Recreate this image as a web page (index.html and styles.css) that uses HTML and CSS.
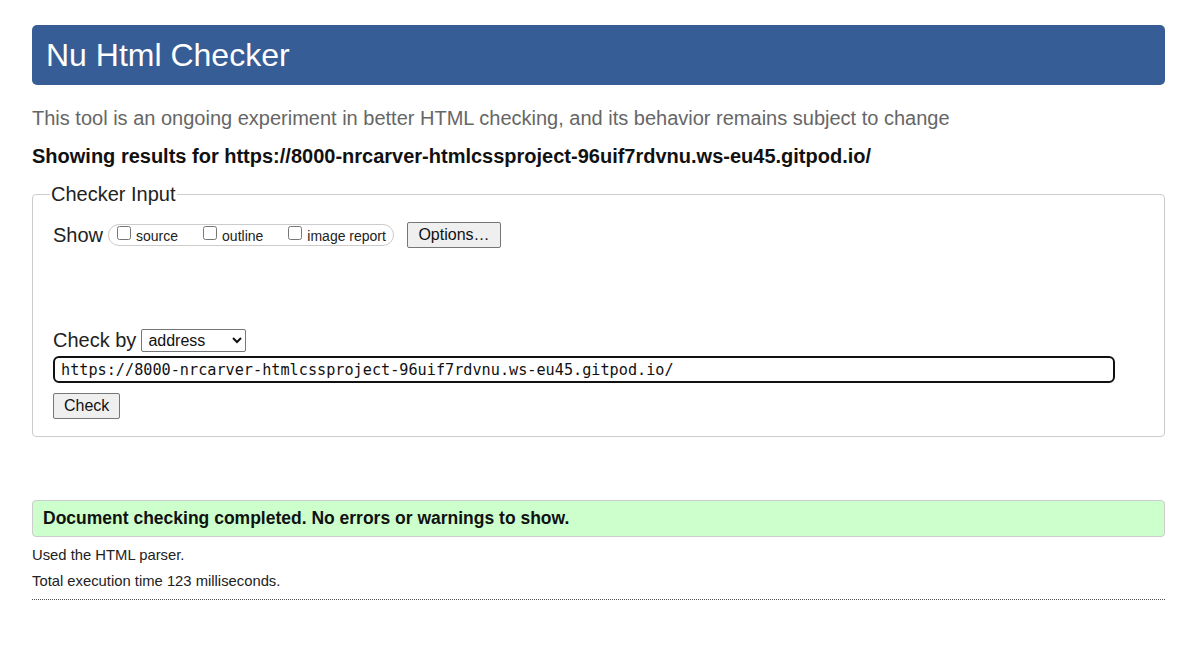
FILE: index.html
```html
<!DOCTYPE html>
<html>
<head>
<meta charset="utf-8">
<title>Nu Html Checker</title>
<link rel="stylesheet" href="styles.css">
</head>
<body>
<h1 class="title">Nu Html Checker</h1>
<p class="intro">This tool is an ongoing experiment in better HTML checking, and its behavior remains subject to change</p>
<p class="results-for">Showing results for https://8000-nrcarver-htmlcssproject-96uif7rdvnu.ws-eu45.gitpod.io/</p>
<form class="checker">
  <fieldset class="input-set">
    <legend class="legend">Checker Input</legend>
    <div class="show-row">
      <span class="label">Show</span>
      <span class="show-group">
        <label class="opt"><input type="checkbox" class="cb"><span class="opt-text">source</span></label>
        <label class="opt"><input type="checkbox" class="cb"><span class="opt-text">outline</span></label>
        <label class="opt"><input type="checkbox" class="cb"><span class="opt-text">image report</span></label>
      </span>
      <button type="button" class="btn options">Options…</button>
    </div>
    <div class="spacer"></div>
    <div class="checkby-row">
      <span class="label">Check by</span>
      <select class="select"><option>address</option></select>
    </div>
    <div class="url-row">
      <input class="url" type="text" value="https://8000-nrcarver-htmlcssproject-96uif7rdvnu.ws-eu45.gitpod.io/">
    </div>
    <div class="check-row">
      <button type="button" class="btn check">Check</button>
    </div>
  </fieldset>
</form>
<p class="success">Document checking completed. No errors or warnings to show.</p>
<p class="details">Used the HTML parser.</p>
<p class="details">Total execution time 123 milliseconds.</p>
<hr class="rule">
</body>
</html>
```
FILE: styles.css
```css
html, body {
  margin: 0;
  padding: 0;
  background: #fff;
}
body {
  font-family: "Liberation Sans", Arial, sans-serif;
  color: #111;
  padding: 25px 33px 32px 32px;
}
.title {
  margin: 0;
  background: #365d95;
  color: #fff;
  font-weight: normal;
  font-size: 32px;
  line-height: 60px;
  height: 60px;
  padding: 0 14px;
  border-radius: 5px;
}
.intro {
  margin: 20px 0 0 0;
  font-size: 20px;
  line-height: 26px;
  color: #666;
}
.results-for {
  margin: 13px 0 0 0;
  font-size: 20px;
  font-weight: bold;
  line-height: 24px;
  color: #111;
}
.checker {
  margin: 14px 0 0 0;
}
.input-set {
  margin: 0;
  padding: 15px 20px 17px 20px;
  border: 1px solid #ccc;
  border-radius: 4px;
}
.legend {
  font-size: 20px;
  padding: 0 1px;
  margin-left: -3px;
  color: #222;
  line-height: 24px;
}
.show-row {
  display: flex;
  align-items: center;
  height: 28px;
}
.label {
  font-size: 20px;
  color: #222;
}
.show-group {
  display: inline-flex;
  align-items: center;
  box-sizing: border-box;
  margin-left: 5px;
  height: 22px;
  border: 1px solid #ccc;
  border-radius: 11px;
  padding: 0 7px 0 8px;
  font-size: 14px;
  color: #222;
}
.opt {
  display: inline-flex;
  align-items: center;
  margin-right: 25px;
}
.opt:last-child {
  margin-right: 0;
}
.opt-text {
  padding-top: 2px;
}
.cb {
  width: 14px;
  height: 14px;
  margin: -5px 5px 0 0;
}
.btn {
  font-family: "Liberation Sans", Arial, sans-serif;
  font-size: 16px;
  color: #111;
  background: #efefef;
  border: 1px solid #767676;
  border-radius: 2px;
  padding: 0 10.5px;
  height: 26px;
}
.options {
  margin-left: 13px;
}
.spacer {
  height: 79px;
}
.checkby-row {
  display: flex;
  align-items: center;
  height: 24px;
}
.select {
  margin-left: 5px;
  font-family: "Liberation Sans", Arial, sans-serif;
  font-size: 16px;
  width: 105px;
  height: 23px;
  padding: 0 2px;
  border: 1px solid #767676;
  border-radius: 2px;
  background: #fff;
  color: #111;
}
.url-row {
  margin-top: 4px;
  padding-right: 29px;
}
.url {
  box-sizing: border-box;
  width: 100%;
  height: 27px;
  border: 2px solid #111;
  border-radius: 6px;
  padding: 0 6px;
  font-family: "DejaVu Sans Mono", "Liberation Mono", monospace;
  font-size: 15.2px;
  color: #111;
}
.check-row {
  margin-top: 10px;
}
.check {
  padding: 0 10px;
}
.success {
  margin: 63px 0 0 0;
  background: #ccffcc;
  border: 1px solid #ccc;
  border-radius: 4px;
  padding: 0 10px;
  height: 35px;
  line-height: 35px;
  font-size: 17.5px;
  font-weight: bold;
  color: #111;
}
.details {
  margin: 9px 0 0 0;
  font-size: 14.8px;
  line-height: 18px;
  color: #222;
}
.details + .details {
  margin-top: 8px;
}
.rule {
  margin: 9px 0 0 0;
  border: 0;
  border-top: 1px dotted #555;
  height: 0;
}
```
